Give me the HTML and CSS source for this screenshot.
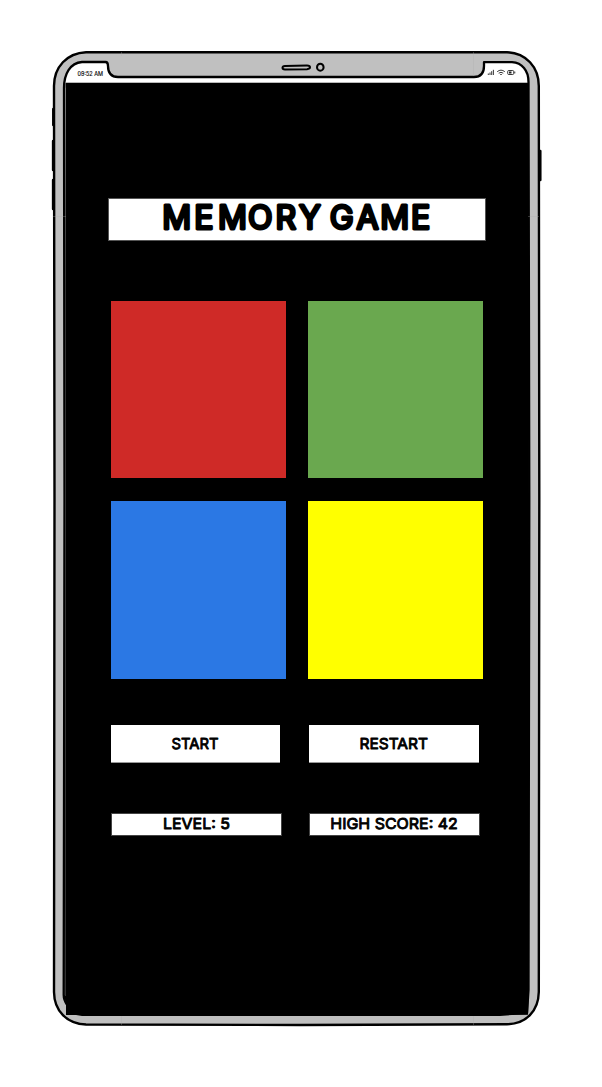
FILE: index.html
```html
<!DOCTYPE html>
<html lang="en">
<head>
<meta charset="utf-8">
<title>Memory Game</title>
<link rel="stylesheet" href="styles.css">
</head>
<body>
<main class="phone">
  <svg class="frame" viewBox="0 0 602 1087" aria-hidden="true">
    <path class="side-button" d="M53.3 109V125M53.1 141V170M53.1 180V209M540.3 151V180"/>
    <path class="shell" d="M86 52.2H507C526 53 538.8 67 538.8 86L539.3 500L538.8 992C538.5 1011 526 1024 507 1024.2L300 1025L86 1024.5C67 1024 54.2 1011 54 992L54.5 500L54 86C54 67 67 53 86 52.2Z"/>
    <path class="glass" d="M82 62H105.500Q108 62 108 66C108 73 111 77 118 77H474C481 77 484 73 484 66V62.200H512C522 63 528.500 70 528.500 82L529.300 500L528.500 990L527 1013H67.200V1005Q63.700 1000 63.700 995L64.500 500L64 88C64 74 70 63 82 62Z"/>
    <path class="screen" d="M65.500 82.800H528L529 500L528.500 1000L528 1014.700L512 1015L500 1016H82L76 1015H66V1004L64.500 997V500Z"/>
    <path class="sheen" d="M65.500 88V996M66 82.500H527M53 216.500H66M528 216.500H539M121.500 52V56M121.500 1016V1025M473.500 52V76M473.500 1016V1025"/>
    <path class="speaker" d="M285 65.900L307 65.600Q310 65.600 310 67.300Q310 69 307 69.200L285 69.500Q282.500 69.500 282.500 67.700Q282.500 66 285 65.900Z"/>
    <ellipse class="speaker" cx="320.300" cy="67.200" rx="3.300" ry="3.500"/>
    <g class="status-icons">
      <path d="M488.300 75V73.500M490 75V72.500M491.700 75V71.200M493.400 75V69.800"/>
      <path d="M497.200 71.700Q501 68.600 504.800 71.700M498.700 73.200Q501 71.400 503.300 73.200M500.200 74.500H501.800"/>
      <rect x="507.700" y="70.500" width="6" height="4" rx="1"/>
      <path class="charge" d="M509 72.500H511.500"/>
      <path d="M514.800 71.600V73.400"/>
    </g>
    <text class="clock" x="77.500" y="75.500" textLength="25.500" lengthAdjust="spacingAndGlyphs">09:52 AM</text>
  </svg>

  <section class="game">
    <h1 class="title">
      <svg class="label label-title" viewBox="0 0 376 41"><text x="53.200 85.300 109 139 166.500 190 213 220.800 247.400 271.300 302" y="29.700">MEMORY GAME</text></svg>
    </h1>
    <div class="board">
      <div class="tile red"></div>
      <div class="tile green"></div>
      <div class="tile blue"></div>
      <div class="tile yellow"></div>
    </div>
    <div class="actions">
      <button class="action"><svg class="label" viewBox="0 0 169 37"><text x="60.500" y="23.500" textLength="47" lengthAdjust="spacingAndGlyphs">START</text></svg></button>
      <button class="action"><svg class="label" viewBox="0 0 169 37"><text x="50" y="23.500" textLength="68.500" lengthAdjust="spacingAndGlyphs">RESTART</text></svg></button>
    </div>
    <div class="stats">
      <div class="stat"><svg class="label" viewBox="0 0 169 21"><text x="51" y="14.700" textLength="67" lengthAdjust="spacingAndGlyphs">LEVEL: 5</text></svg></div>
      <div class="stat"><svg class="label" viewBox="0 0 169 21"><text x="20.300" y="14.700" textLength="127.500" lengthAdjust="spacingAndGlyphs">HIGH SCORE: 42</text></svg></div>
    </div>
  </section>
</main>
</body>
</html>
```
FILE: styles.css
```css
* { box-sizing: border-box; }
body { margin: 0; background: #fff; font-family: Inter, "Noto Sans", sans-serif; }
.phone { display: grid; width: 602px; height: 1087px; overflow: hidden; }
.frame, .game { grid-area: 1 / 1; }
.frame { width: 602px; height: 1087px; }
.shell { fill: #c0c0c0; stroke: #000; stroke-width: 2.4; }
.side-button { stroke: #000; stroke-width: 2.5; stroke-linecap: round; fill: none; }
.glass { fill: #fff; stroke: #000; stroke-width: 2.3; stroke-linejoin: round; }
.screen { fill: #000; }
.sheen { fill: none; stroke: #aaa; stroke-width: .6; opacity: .5; }
.speaker { fill: #c0c0c0; stroke: #000; stroke-width: 2; }
.status-icons { fill: none; stroke: #222; stroke-width: .9; }
.charge { stroke-width: 2; }
.clock { font-size: 6.2px; fill: #000; stroke: #000; stroke-width: .15; }
.game { padding: 198px 0 0 108px; }
.title { width: 378px; height: 43px; margin: 0; background: #fff; border: 1px solid #555; }
.label { display: block; width: 100%; height: 100%; overflow: visible; }
.label text { font-family: Inter, "Noto Sans", sans-serif; font-size: 15px; font-weight: 400; fill: #000; stroke: #000; stroke-width: .85px; stroke-linejoin: round; }
.label-title text { font-size: 32px; stroke-width: 3px; }
.board { display: grid; grid-template-columns: 175px 175px; grid-auto-rows: 177px; gap: 23px 22px; margin: 60px 0 0 3px; }
.blue, .yellow { height: 178px; }
.red { background: #cf2a27; }
.green { background: #6aa84f; }
.blue { background: #2b78e4; }
.yellow { background: #ff0; }
.actions { display: flex; gap: 29px; margin: 47px 0 0 3px; }
.action { width: 169px; height: 38px; padding: 0; border: 0; border-bottom: 1px solid #999; background: #fff; }
.action + .action { width: 170px; }
.stats { display: flex; gap: 27px; margin: 50px 0 0 3px; }
.stat { width: 171px; height: 23px; background: #fff; border: 1px solid #444; }
```
